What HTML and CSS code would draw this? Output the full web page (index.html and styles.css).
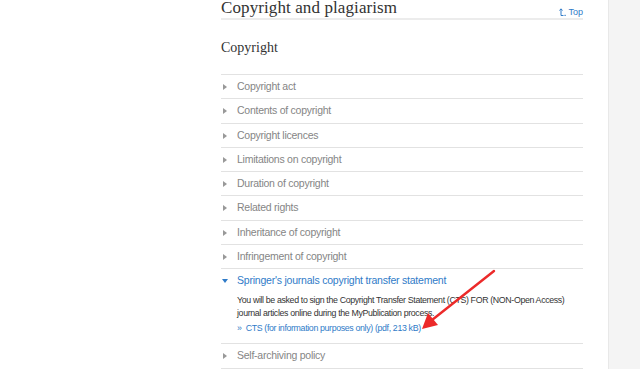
FILE: index.html
```html
<!DOCTYPE html>
<html lang="en">
<head>
  <meta charset="UTF-8">
  <meta name="viewport" content="width=device-width, initial-scale=1.0">
  <title>Copyright and plagiarism</title>
  <link rel="stylesheet" href="styles.css">
</head>
<body>
  <div class="page">
    <main class="content">
      <div class="page-head">
        <h1 class="title">Copyright and plagiarism</h1>
        <a class="top-link" href="#">
          <svg width="7" height="8" viewBox="0 0 7 8"><path d="M2 7.5V1M0.5 2.5L2 0.8 3.5 2.5M2 7.5H4.5" fill="none" stroke="currentColor" stroke-width="1"/><rect x="5.5" y="6.8" width="1.2" height="1.2" fill="currentColor"/></svg>
          Top
        </a>
      </div>

      <h2 class="section">Copyright</h2>

      <ul class="accordion">
        <li class="item"><div class="item-head">Copyright act</div></li>
        <li class="item"><div class="item-head">Contents of copyright</div></li>
        <li class="item"><div class="item-head">Copyright licences</div></li>
        <li class="item"><div class="item-head">Limitations on copyright</div></li>
        <li class="item"><div class="item-head">Duration of copyright</div></li>
        <li class="item"><div class="item-head">Related rights</div></li>
        <li class="item"><div class="item-head">Inheritance of copyright</div></li>
        <li class="item"><div class="item-head">Infringement of copyright</div></li>
        <li class="item open">
          <div class="item-head">Springer's journals copyright transfer statement</div>
          <div class="item-body">
            <p>You will be asked to sign the Copyright Transfer Statement (CTS) FOR (NON-Open Access) journal articles online during the MyPublication process.</p>
            <a class="doc-link" href="#">&raquo;&nbsp; CTS (for information purposes only) (pdf, 213 kB)</a>
          </div>
        </li>
        <li class="item"><div class="item-head">Self-archiving policy</div></li>
      </ul>
    </main>
    <aside class="side"></aside>
  </div>

  <svg class="annotation" width="640" height="369" viewBox="0 0 640 369">
    <line x1="494" y1="271" x2="432" y2="320" stroke="#ec2a2a" stroke-width="2.4" stroke-linecap="round"/>
    <path d="M422 329 L428 313 L438 325 Z" fill="#ec2a2a"/>
  </svg>
</body>
</html>
```

FILE: styles.css
```css
body {
  margin: 0;
  background-color: #ffffff;
  font-family: "Liberation Sans", Arial, sans-serif;
  overflow: hidden;
}
.page {
  display: flex;
  height: 369px;
}
.content {
  width: 362px;
  padding-left: 221px;
  padding-right: 25px;
}
.side {
  flex: 1;
  background-color: #f4f4f4;
  border-left: 1px solid #e8e8e8;
}
.page-head {
  display: flex;
  justify-content: space-between;
  align-items: flex-end;
  height: 19px;
  border-bottom: 2px solid #ececec;
  margin-top: -1px;
}
.title {
  font-family: "Liberation Serif", Georgia, serif;
  font-size: 17px;
  font-weight: normal;
  color: #333;
  margin: 0;
  line-height: 20px;
  letter-spacing: 0.1px;
}
.top-link {
  font-size: 9px;
  color: #2f7bc8;
  text-decoration: none;
  line-height: 12px;
  margin-bottom: 0;
  display: flex;
  align-items: center;
  gap: 2px;
}
.section {
  font-family: "Liberation Serif", Georgia, serif;
  font-size: 14px;
  font-weight: normal;
  color: #333;
  margin: 20px 0 0 0;
  line-height: 16px;
}
.accordion {
  list-style: none;
  margin: 18px 0 0 0;
  padding: 0;
}
.item {
  border-top: 1px solid #e2e2e2;
}
.item:last-child {
  border-bottom: 1px solid #e2e2e2;
}
.item-head {
  position: relative;
  height: 23.25px;
  line-height: 23px;
  padding-left: 16px;
  font-size: 10.5px;
  letter-spacing: -0.25px;
  color: #858585;
}
.item-head::before {
  content: "";
  position: absolute;
  left: 2px;
  top: 9px;
  border-left: 4px solid #999;
  border-top: 3px solid transparent;
  border-bottom: 3px solid transparent;
}
.open .item-head {
  color: #2f7bc8;
  letter-spacing: -0.22px;
}
.open .item-head::before {
  left: 1px;
  top: 10px;
  border-top: 4px solid #2f7bc8;
  border-left: 3px solid transparent;
  border-right: 3px solid transparent;
  border-bottom: none;
}
.item-body {
  padding: 2px 0 8px 16px;
}
.item-body p {
  margin: 0;
  font-size: 8.8px;
  letter-spacing: -0.35px;
  line-height: 13px;
  color: #333;
}
.doc-link {
  display: block;
  margin-top: 2px;
  font-size: 8.8px;
  letter-spacing: -0.35px;
  line-height: 13px;
  color: #2f7bc8;
  text-decoration: none;
}
.annotation {
  position: absolute;
  left: 0;
  top: 0;
  pointer-events: none;
}
```
